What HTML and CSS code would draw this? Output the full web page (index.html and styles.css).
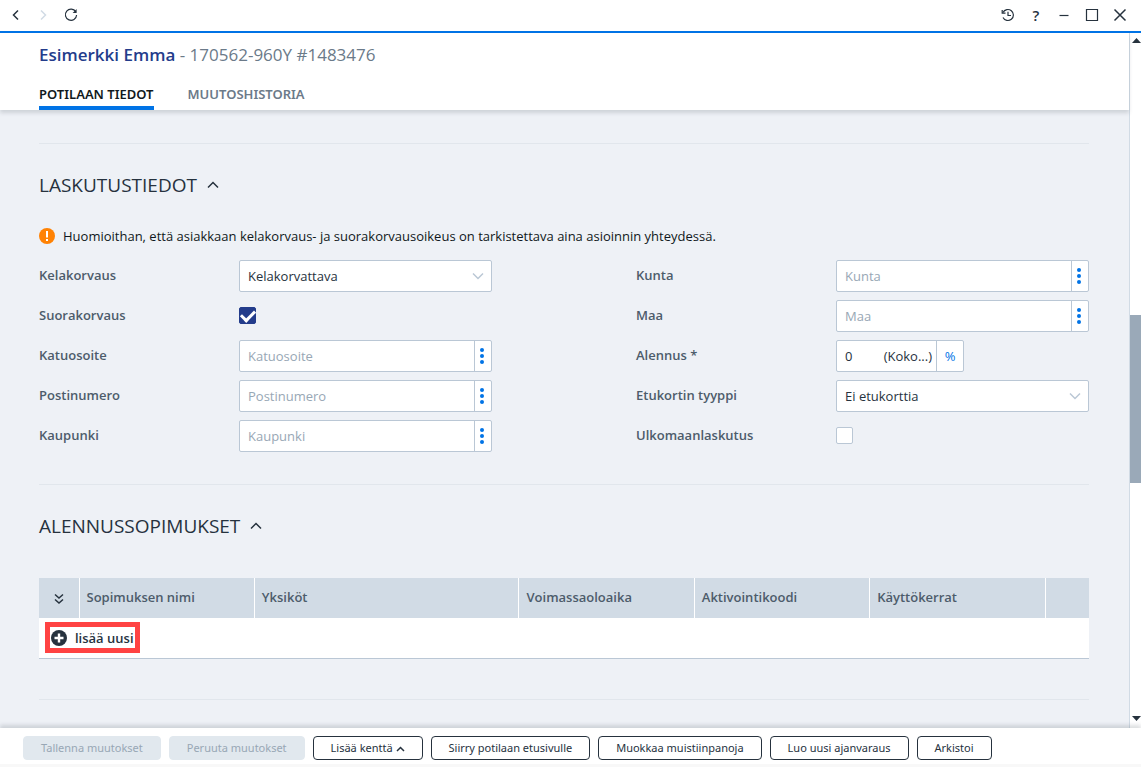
FILE: index.html
```html
<!DOCTYPE html>
<html lang="fi">

<head>
    <meta charset="UTF-8" />
    <title>Potilaan tiedot</title>
    <meta name="viewport" content="width=device-width, initial-scale=1.0" />
    <link rel="stylesheet" href="styles.css">
</head>

<body>

    <!-- Window bar -->
    <nav class="topbar">
        <button class="icon-btn" aria-label="Takaisin">
            <svg width="14" height="14" viewBox="0 0 14 14"><path d="M10 2.500 5.500 7 10 11.500" /></svg>
        </button>
        <button class="icon-btn faded" aria-label="Eteenpäin" disabled>
            <svg width="14" height="14" viewBox="0 0 14 14"><path d="M5 2.500 9.500 7 5 11.500" /></svg>
        </button>
        <button class="icon-btn" aria-label="Päivitä">
            <svg class="thin" width="14" height="14" viewBox="0 0 14 14"><path d="M11.800 3.800A5.600 5.600 0 1 0 12.600 7" /><path class="solid" d="M12.600 1v4H8.600z" /></svg>
        </button>
        <span class="spacer"></span>
        <button class="icon-btn" aria-label="Historia">
            <svg class="thin" width="14" height="14" viewBox="0 0 14 14"><path d="M2 4.500A5.500 5.500 0 1 1 2 9.500M7 3.800V7.500h3" /><path d="M1.200 2v3.200h3.300" /></svg>
        </button>
        <button class="icon-btn help" aria-label="Ohje">?</button>
        <button class="icon-btn" aria-label="Pienennä">
            <svg class="thin" width="14" height="14" viewBox="0 0 14 14"><path d="M2.500 7.500h9" /></svg>
        </button>
        <button class="icon-btn" aria-label="Suurenna">
            <svg class="thin" width="14" height="14" viewBox="0 0 14 14"><path d="M1.500 1.500h11v11h-11z" /></svg>
        </button>
        <button class="icon-btn" aria-label="Sulje">
            <svg width="14" height="14" viewBox="0 0 14 14"><path d="M1.500 1.500l11 11M12.500 1.500l-11 11" /></svg>
        </button>
    </nav>

    <div class="main">
        <div class="page">

            <header class="patient">
                <h1><b>Esimerkki Emma</b> - 170562-960Y #1483476</h1>
                <div class="tabs">
                    <a href="#tiedot" class="active">POTILAAN TIEDOT</a>
                    <a href="#historia">MUUTOSHISTORIA</a>
                </div>
            </header>

            <main class="content" id="tiedot">

                <!-- Laskutustiedot -->
                <section>
                    <h2>LASKUTUSTIEDOT
                        <svg width="12" height="8" viewBox="0 0 12 8"><path d="M1 6.500 6 1.500l5 5" /></svg>
                    </h2>
                    <p class="notice">
                        <svg width="16" height="16" viewBox="0 0 16 16"><circle cx="8" cy="8" r="8" fill="#ff8204" /><path d="M7 3h2v6.500H7zM7 11h2v2H7z" fill="#fff" /></svg>
                        Huomioithan, että asiakkaan kelakorvaus- ja suorakorvausoikeus on tarkistettava aina asioinnin yhteydessä.
                    </p>
                    <form class="form">
                        <div class="column">
                            <div class="row">
                                <label for="kela">Kelakorvaus</label>
                                <div class="field">
                                    <select id="kela"><option>Kelakorvattava</option></select>
                                    <svg class="arrow" width="12" height="8" viewBox="0 0 12 8"><path d="M1 1.500l5 5 5-5" /></svg>
                                </div>
                            </div>
                            <div class="row">
                                <label for="suora">Suorakorvaus</label>
                                <input type="checkbox" id="suora" checked>
                            </div>
                            <div class="row">
                                <label for="katu">Katuosoite</label>
                                <div class="field">
                                    <input type="text" id="katu" placeholder="Katuosoite">
                                    <button type="button" class="more" aria-label="Valitse katuosoite"><i></i><i></i><i></i></button>
                                </div>
                            </div>
                            <div class="row">
                                <label for="posti">Postinumero</label>
                                <div class="field">
                                    <input type="text" id="posti" placeholder="Postinumero">
                                    <button type="button" class="more" aria-label="Valitse postinumero"><i></i><i></i><i></i></button>
                                </div>
                            </div>
                            <div class="row">
                                <label for="kaupunki">Kaupunki</label>
                                <div class="field">
                                    <input type="text" id="kaupunki" placeholder="Kaupunki">
                                    <button type="button" class="more" aria-label="Valitse kaupunki"><i></i><i></i><i></i></button>
                                </div>
                            </div>
                        </div>
                        <div class="column">
                            <div class="row">
                                <label for="kunta">Kunta</label>
                                <div class="field">
                                    <input type="text" id="kunta" placeholder="Kunta">
                                    <button type="button" class="more" aria-label="Valitse kunta"><i></i><i></i><i></i></button>
                                </div>
                            </div>
                            <div class="row">
                                <label for="maa">Maa</label>
                                <div class="field">
                                    <input type="text" id="maa" placeholder="Maa">
                                    <button type="button" class="more" aria-label="Valitse maa"><i></i><i></i><i></i></button>
                                </div>
                            </div>
                            <div class="row">
                                <label for="alennus">Alennus *</label>
                                <div class="field small">
                                    <input type="text" id="alennus" value="0">
                                    <span class="hint">(Koko...)</span>
                                    <button type="button" class="percent">%</button>
                                </div>
                            </div>
                            <div class="row">
                                <label for="etu">Etukortin tyyppi</label>
                                <div class="field">
                                    <select id="etu"><option>Ei etukorttia</option></select>
                                    <svg class="arrow" width="12" height="8" viewBox="0 0 12 8"><path d="M1 1.500l5 5 5-5" /></svg>
                                </div>
                            </div>
                            <div class="row">
                                <label for="ulko">Ulkomaanlaskutus</label>
                                <input type="checkbox" id="ulko">
                            </div>
                        </div>
                    </form>
                </section>

                <!-- Alennussopimukset -->
                <section>
                    <h2>ALENNUSSOPIMUKSET
                        <svg width="12" height="8" viewBox="0 0 12 8"><path d="M1 6.500 6 1.500l5 5" /></svg>
                    </h2>
                    <table class="contracts">
                        <thead>
                            <tr>
                                <th class="toggle">
                                    <svg width="10" height="12" viewBox="0 0 10 12"><path d="M1 1.500l4 3.500 4-3.500M1 6.500l4 3.500 4-3.500" /></svg>
                                </th>
                                <th class="mid">Sopimuksen nimi</th>
                                <th class="wide">Yksiköt</th>
                                <th class="mid">Voimassaoloaika</th>
                                <th class="mid">Aktivointikoodi</th>
                                <th class="mid">Käyttökerrat</th>
                                <th class="last"></th>
                            </tr>
                        </thead>
                        <tbody>
                            <tr>
                                <td colspan="7">
                                    <button class="add">
                                        <svg width="16" height="16" viewBox="0 0 16 16"><circle cx="8" cy="8" r="8" fill="#26323e" /><path d="M8 3.500v9M3.500 8h9" /></svg>
                                        lisää uusi
                                    </button>
                                </td>
                            </tr>
                        </tbody>
                    </table>
                </section>

                <section></section>
            </main>
        </div>

        <div class="scrollbar">
            <svg width="9" height="5" viewBox="0 0 9 5"><path d="M0 5 4.500 0 9 5z" /></svg>
            <div class="track"><div class="thumb"></div></div>
            <svg width="9" height="5" viewBox="0 0 9 5"><path d="M0 0h9L4.500 5z" /></svg>
        </div>
    </div>

    <footer class="actions">
        <button disabled>Tallenna muutokset</button>
        <button disabled>Peruuta muutokset</button>
        <button>Lisää kenttä <svg width="9" height="6" viewBox="0 0 9 6"><path d="M1 5l3.500-3.500L8 5" /></svg></button>
        <button>Siirry potilaan etusivulle</button>
        <button>Muokkaa muistiinpanoja</button>
        <button>Luo uusi ajanvaraus</button>
        <button>Arkistoi</button>
    </footer>

</body>

</html>
```

FILE: styles.css
```css
* {
    box-sizing: border-box;
}

body {
    margin: 0;
    height: 100vh;
    display: flex;
    flex-direction: column;
    overflow: hidden;
    background: #fff;
    color: #26323e;
    font-family: 'Segoe UI', 'Open Sans', sans-serif;
    font-size: 13px;
}

button,
input,
select {
    font: inherit;
    color: inherit;
}

button {
    background: none;
    border: none;
    padding: 0;
    cursor: pointer;
}

svg {
    fill: none;
    stroke: #26323e;
    stroke-width: 1.5;
    flex-shrink: 0;
}

/* window bar */
.topbar {
    display: flex;
    align-items: center;
    gap: 14px;
    height: 33px;
    padding: 0 14px 2px 8px;
    border-bottom: 2px solid #0073e6;
    flex-shrink: 0;
}

.icon-btn {
    width: 14px;
    height: 14px;
    display: flex;
    align-items: center;
    justify-content: center;
}

.icon-btn.faded svg {
    stroke: #d1dbe5;
}

.icon-btn .thin {
    stroke-width: 1.2;
}

.icon-btn .solid {
    fill: #26323e;
    stroke: none;
}

.help {
    font-size: 15px;
    font-weight: 600;
}

.spacer {
    flex: 1;
}

.main {
    flex: 1;
    display: flex;
    min-height: 0;
}

.page {
    flex: 1;
    display: flex;
    flex-direction: column;
    min-width: 0;
}

/* patient header */
.patient {
    position: relative;
    padding: 10px 39px 0;
    background: #fff;
    box-shadow: 0 3px 4px rgba(38, 50, 62, 0.16);
}

.patient h1 {
    margin: 0;
    font-size: 17px;
    line-height: 24px;
    font-weight: 400;
    color: #6b7a89;
}

.patient b {
    font-weight: 600;
    color: #233c8b;
}

.tabs {
    display: flex;
    gap: 34px;
    margin-top: 16px;
}

.tabs a {
    height: 27px;
    line-height: 22px;
    font-family: 'Segoe UI', 'Noto Sans', sans-serif;
    font-weight: 600;
    color: #6b7a89;
    text-decoration: none;
}

.tabs .active {
    color: #101820;
    border-bottom: 4px solid #0073e6;
}

/* content */
.content {
    flex: 1;
    min-height: 0;
    overflow: hidden;
    padding: 33px 40px 0 39px;
    background: #eef1f6;
}

section {
    border-top: 1px solid #e1e6ec;
    padding: 25px 0 32px;
}

section + section {
    padding-bottom: 40px;
}

h2 {
    display: flex;
    align-items: center;
    gap: 10px;
    margin: 0;
    font-size: 19px;
    line-height: 32px;
    font-weight: 400;
}

.notice {
    display: flex;
    align-items: center;
    gap: 8px;
    margin: 24px 0 13px;
    line-height: 22px;
    color: #101820;
}

.notice svg {
    stroke: none;
}

.form {
    display: grid;
    grid-template-columns: 1fr 1fr;
    gap: 144px;
}

.column {
    display: flex;
    flex-direction: column;
    gap: 8px;
}

.row {
    display: flex;
    align-items: center;
    height: 32px;
}

.row label {
    width: 200px;
    padding-bottom: 2px;
    font-weight: 600;
    color: #4d5c6b;
}

.field {
    position: relative;
    flex: 1;
    display: flex;
    align-items: center;
    min-width: 0;
    height: 32px;
    background: #fff;
    border: 1px solid #bac7d5;
    border-radius: 2px;
}

.field.small {
    flex: none;
    width: 128px;
}

.field input,
.field select {
    flex: 1;
    min-width: 0;
    height: 30px;
    padding: 0 8px;
    border: none;
    background: none;
    appearance: none;
}

.field input::placeholder {
    color: #98a7b5;
    opacity: 1;
}

.arrow {
    position: absolute;
    right: 7px;
    stroke: #bac7d5;
    pointer-events: none;
}

.hint {
    padding-right: 4px;
}

.more,
.percent {
    height: 30px;
    width: 17px;
    display: flex;
    flex-direction: column;
    align-items: center;
    justify-content: center;
    gap: 2px;
    border-left: 1px solid #bac7d5;
    color: #0073e6;
}

.more {
    padding-right: 2px;
}

.percent {
    width: 27px;
}

.more i {
    width: 4px;
    height: 4px;
    border-radius: 50%;
    background: #0073e6;
}

input[type="checkbox"] {
    appearance: none;
    display: flex;
    justify-content: center;
    width: 17px;
    height: 17px;
    margin: 0 0 2px;
    background: #fff;
    border: 1px solid #bac7d5;
    border-radius: 2px;
}

input[type="checkbox"]:checked {
    background: #233c8b;
    border-color: #233c8b;
}

input[type="checkbox"]:checked::after {
    content: '';
    width: 11px;
    height: 6px;
    margin-top: 3px;
    border: solid #fff;
    border-width: 0 0 3px 3px;
    transform: translateY(-1px) rotate(-45deg);
}

/* contracts table */
.contracts {
    width: 100%;
    margin-top: 36px;
    border-collapse: collapse;
    table-layout: fixed;
    background: #fff;
}

.contracts tr {
    height: 40px;
}

.contracts th {
    padding: 0 7px 2px;
    text-align: left;
    font-weight: 600;
    color: #4d5c6b;
    background: #d1dbe5;
    border-left: 1px solid #fff;
}

.contracts .toggle {
    width: 40px;
    padding: 4px 0 0;
    text-align: center;
    border-left: none;
}

.contracts .mid {
    width: 16.7%;
}

.contracts .last {
    width: 44px;
}

.contracts td {
    padding: 0 6px;
    border-bottom: 1px solid #bac7d5;
}

.add {
    display: flex;
    align-items: center;
    gap: 8px;
    height: 31px;
    padding: 0 1px;
    border: 5px solid #ff4343;
    font-weight: 600;
}

.add svg {
    stroke: none;
}

.add path {
    stroke: #fff;
    stroke-width: 2.4;
}

/* scrollbar */
.scrollbar {
    width: 12px;
    display: flex;
    flex-direction: column;
    align-items: flex-end;
    padding: 5px 0 7px;
    border-left: 1px solid #d1dbe5;
}

.scrollbar svg {
    fill: #26323e;
    stroke: none;
}

.track {
    flex: 1;
    width: 100%;
    display: flex;
    flex-direction: column;
    padding-top: 272px;
}

.thumb {
    height: 168px;
    background: #9aa9b8;
}

/* bottom buttons */
.actions {
    position: relative;
    display: flex;
    gap: 8px;
    padding: 8px 23px 4px;
    background: #fff;
    border-bottom: 3px solid #f8f8f8;
    box-shadow: 0 -3px 4px rgba(38, 50, 62, 0.16);
}

.actions button {
    height: 24px;
    padding: 0 17px 1px;
    border: 1px solid #26323e;
    border-radius: 4px;
    font-family: 'Noto Sans', sans-serif;
    font-size: 11px;
    white-space: nowrap;
}

.actions button:disabled {
    background: #e1e8ee;
    border-color: #e1e8ee;
    color: #98a7b5;
}
```
